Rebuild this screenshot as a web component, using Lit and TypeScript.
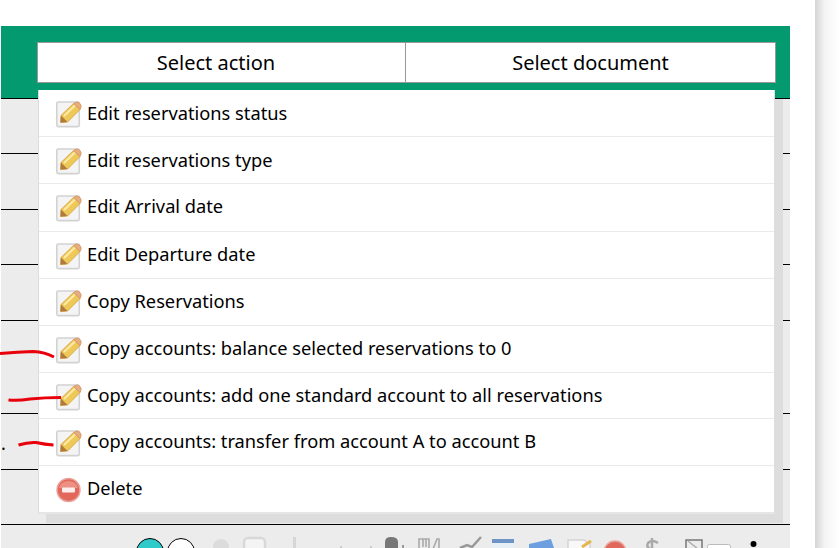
import { LitElement, html, css, svg } from 'lit';
import { customElement } from 'lit/decorators.js';

const MENU = [
  'Edit reservations status',
  'Edit reservations type',
  'Edit Arrival date',
  'Edit Departure date',
  'Copy Reservations',
  'Copy accounts: balance selected reservations to 0',
  'Copy accounts: add one standard account to all reservations',
  'Copy accounts: transfer from account A to account B',
];

// the menu rows are not all the same height in the source
const ITEM_H = [47, 47, 48, 47, 47, 47, 46, 47, 46];

// background table rows, height includes the 1px rule
const ROWS = [55, 56, 55, 56, 93, 56, 55];

const pencil = html`<svg class="ico" width="26" height="28" viewBox="0 0 26 28">
  <rect x="0.8" y="2" width="22.5" height="24.6" rx="1.5" fill="#f4f4f4" stroke="#d2d2d2" stroke-width="1.6" />
  <path d="M4.5 22.5 L5 15.5 L17.5 3.5 L24 9.5 L11.5 22 Z" fill="#efc958" stroke="#dca94c" stroke-width="1" />
  <path d="M17.5 3.5 L20.5 2 Q22.5 1.8 24 3.5 Q25.5 5.5 25 7 L24 9.5 Z" fill="#e8ad7c" stroke="#d69a6c" stroke-width="1" />
  <path d="M4.5 22.5 L5 15.5 L11.5 22 Z" fill="#ad7a42" />
  <path d="M8 16 L19 5.5" stroke="#fbeaa8" stroke-width="2" fill="none" />
</svg>`;

const minus = html`<svg class="ico del" width="26" height="26" viewBox="0 0 26 26">
  <circle cx="12.5" cy="13" r="11.5" fill="#e2685c" stroke="#e9a59d" stroke-width="1.5" />
  <path d="M3 11 A10 10 0 0 1 22 11 Z" fill="#ee8f84" />
  <rect x="6" y="10.5" width="13" height="5" rx="1" fill="#fbeeec" />
</svg>`;

@customElement('app-root')
export class AppRoot extends LitElement {
  static styles = css`
    :host {
      display: flex;
      position: relative;
      width: 839px;
      height: 548px;
      overflow: hidden;
      background: #fff;
      font-family: 'Noto Sans', sans-serif;
      color: #000;
    }
    .panel {
      position: relative;
      width: 789px;
      margin: 26px 0 0 1px;
      background: #ececec;
      overflow: hidden;
    }
    .scroll {
      width: 24px;
      margin-left: 25px;
      background: linear-gradient(90deg, #d4d4d4, #f4f4f4 40%, #fff);
    }
    .head {
      display: flex;
      height: 73px;
      padding: 16px 14px 0 36px;
      box-sizing: border-box;
      background: #039a6f;
      border-bottom: 1px solid #000;
    }
    .tabs {
      display: flex;
      flex: 1;
      height: 41px;
      box-sizing: border-box;
      background: #fff;
      border: 1px solid #999;
      font-size: 20px;
    }
    .tab {
      flex: 1;
      display: flex;
      align-items: center;
      justify-content: center;
    }
    .tab.first {
      flex: 0 0 367px;
      box-sizing: border-box;
      padding-right: 11px;
    }
    .tab + .tab {
      border-left: 1px solid #999;
    }
    .row {
      box-sizing: border-box;
      border-bottom: 1px solid #000;
    }
    .dot {
      font-size: 18px;
      line-height: 1;
      padding: 20px 0 0 0;
    }
    .menu {
      position: absolute;
      left: 37px;
      top: 64px;
      width: 737px;
      box-sizing: border-box;
      background: #fff;
      border-left: 1px solid #ddd;
      border-right: 1px solid #ddd;
      border-bottom: 2px solid #e6e6e6;
      box-shadow: 8px 9px 0 #ddd;
    }
    .item {
      display: flex;
      align-items: flex-start;
      gap: 5px;
      box-sizing: border-box;
      padding-left: 17px;
      font-size: 18.25px;
      border-bottom: 1px solid #eaeaea;
    }
    .item:last-child {
      border-bottom: 0;
    }
    .item span {
      margin-top: 9px;
    }
    .item:nth-child(-n + 2) span {
      margin-top: 10px;
    }
    .ico {
      flex: none;
      margin-top: 10px;
      filter: blur(0.35px);
    }
    .ico.del {
      margin-top: 11px;
    }
    .tools {
      position: absolute;
      left: 0;
      top: 0;
      pointer-events: none;
    }
    .soft {
      filter: blur(0.7px);
    }
    .ink {
      position: absolute;
      left: 0;
      top: 0;
      pointer-events: none;
    }
  `;

  render() {
    return html`
      <div class="panel">
        <div class="head">
          <div class="tabs">
            <div class="tab first">Select action</div>
            <div class="tab">Select document</div>
          </div>
        </div>
        ${ROWS.map(
          (h, i) => html`<div class="row" style="height:${h}px">
            ${i === 5 ? html`<div class="dot">.</div>` : ''}
          </div>`
        )}
        <svg class="tools" width="789" height="522" viewBox="1 26 789 522">
          ${svg`
            <circle cx="150" cy="552" r="13.5" fill="#2fcbcb" stroke="#000" />
            <circle cx="181" cy="552" r="13.5" fill="#fff" stroke="#000" />
            <g class="soft">
              <circle cx="221" cy="547" r="8" fill="#dcdcdc" />
              <rect x="244" y="538" width="21" height="20" rx="4" fill="#f4f4f4" stroke="#d8d8d8" stroke-width="2.5" />
              <rect x="293" y="537" width="3" height="13" fill="#d6d6d6" />
              <rect x="340" y="546" width="2" height="2" fill="#ccc" />
              <rect x="370" y="546" width="2" height="2" fill="#ccc" />
              <path d="M385 549 V542 Q385 537 391 537 Q398 537 398 542 V549 Z" fill="#777" />
              <rect x="402" y="545" width="2" height="3" fill="#999" />
              <path d="M419 549 V539 H429 V549 M423 539 V547 M426 539 V547 M433 549 L437 539 H439 V549" fill="none" stroke="#aaa" stroke-width="1.6" />
              <path d="M460 548 L467 545 L472 547 L481 537" fill="none" stroke="#999" stroke-width="2.5" />
              <rect x="492" y="539" width="22" height="10" fill="#e6eef6" />
              <rect x="492" y="539" width="22" height="4" fill="#6d94c4" />
              <path d="M529 544 L551 539 L554 548 H529 Z" fill="#6d9ee0" />
              <path d="M568 549 V540 H584 L590 544 V549" fill="#f8f8f8" stroke="#d4d4d4" stroke-width="1.5" />
              <path d="M582 547 L591 541" stroke="#e8b44c" stroke-width="3" />
              <circle cx="615" cy="552" r="11" fill="#e2685c" stroke="#e9a59d" stroke-width="1.5" />
              <path d="M652 538 V549 M658 543 Q652 539 648 543 Q646 547 650 549" fill="none" stroke="#aaa" stroke-width="2.5" />
              <path d="M686 549 V540 H702 V549" fill="none" stroke="#777" stroke-width="1.5" />
              <path d="M688 541 L698 549" stroke="#aaa" stroke-width="1.5" />
            </g>
            <rect x="707.5" y="544.5" width="23" height="10" rx="2" fill="#fff" stroke="#bbb" />
            <circle cx="753.5" cy="544" r="3" fill="#000" />
          `}
        </svg>
        <div class="menu">
          ${MENU.map(
            (m, i) => html`<div class="item" style="height:${ITEM_H[i]}px">${pencil}<span>${m}</span></div>`
          )}
          <div class="item" style="height:${ITEM_H[8]}px">${minus}<span>Delete</span></div>
        </div>
      </div>
      <div class="scroll"></div>
      <svg class="ink" width="839" height="548" viewBox="0 0 839 548">
        <path d="M0 353.5 Q18 352 33 351.5 Q45 352 54 357" fill="none" stroke="#e8000b" stroke-width="3" />
        <path d="M8.5 400 Q18 401 30 399 Q45 397.5 61 397.5" fill="none" stroke="#e8000b" stroke-width="3" />
        <path d="M18.5 445 Q28 442 36 442.5 Q45 444.5 53.5 445" fill="none" stroke="#e8000b" stroke-width="3" />
      </svg>
    `;
  }
}
